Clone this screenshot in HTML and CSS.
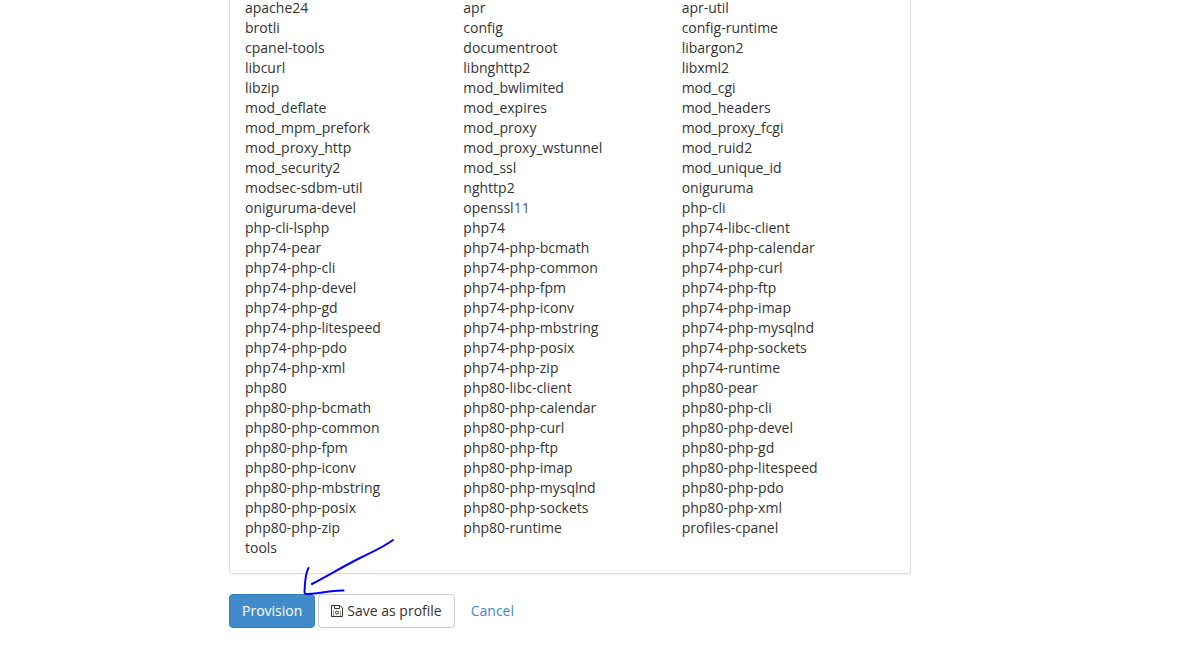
FILE: index.html
```
<!DOCTYPE html>
<html lang="en">
<head>
<meta charset="utf-8">
<title>Review packages</title>
<link rel="stylesheet" href="styles.css">
</head>
<body>
<main class="page">
<section class="panel">
<ul class="packages">
<li>apache24</li><li>apr</li><li>apr-util</li>
<li>brotli</li><li>config</li><li>config-runtime</li>
<li>cpanel-tools</li><li>documentroot</li><li>libargon2</li>
<li>libcurl</li><li>libnghttp2</li><li>libxml2</li>
<li>libzip</li><li>mod_bwlimited</li><li>mod_cgi</li>
<li>mod_deflate</li><li>mod_expires</li><li>mod_headers</li>
<li>mod_mpm_prefork</li><li>mod_proxy</li><li>mod_proxy_fcgi</li>
<li>mod_proxy_http</li><li>mod_proxy_wstunnel</li><li>mod_ruid2</li>
<li>mod_security2</li><li>mod_ssl</li><li>mod_unique_id</li>
<li>modsec-sdbm-util</li><li>nghttp2</li><li>oniguruma</li>
<li>oniguruma-devel</li><li>openssl<span class="version">11</span></li><li>php-cli</li>
<li>php-cli-lsphp</li><li>php74</li><li>php74-libc-client</li>
<li>php74-pear</li><li>php74-php-bcmath</li><li>php74-php-calendar</li>
<li>php74-php-cli</li><li>php74-php-common</li><li>php74-php-curl</li>
<li>php74-php-devel</li><li>php74-php-fpm</li><li>php74-php-ftp</li>
<li>php74-php-gd</li><li>php74-php-iconv</li><li>php74-php-imap</li>
<li>php74-php-litespeed</li><li>php74-php-mbstring</li><li>php74-php-mysqlnd</li>
<li>php74-php-pdo</li><li>php74-php-posix</li><li>php74-php-sockets</li>
<li>php74-php-xml</li><li>php74-php-zip</li><li>php74-runtime</li>
<li>php80</li><li>php80-libc-client</li><li>php80-pear</li>
<li>php80-php-bcmath</li><li>php80-php-calendar</li><li>php80-php-cli</li>
<li>php80-php-common</li><li>php80-php-curl</li><li>php80-php-devel</li>
<li>php80-php-fpm</li><li>php80-php-ftp</li><li>php80-php-gd</li>
<li>php80-php-iconv</li><li>php80-php-imap</li><li>php80-php-litespeed</li>
<li>php80-php-mbstring</li><li>php80-php-mysqlnd</li><li>php80-php-pdo</li>
<li>php80-php-posix</li><li>php80-php-sockets</li><li>php80-php-xml</li>
<li>php80-php-zip</li><li>php80-runtime</li><li>profiles-cpanel</li>
<li>tools</li>
</ul>
</section>
<div class="actions">
<button class="btn btn-primary" type="button">Provision</button>
<button class="btn btn-default" type="button"><svg class="icon" viewBox="0 0 12 12" aria-hidden="true"><path d="M.5 .5H9L11.500 3V11.500H.5ZM3.500 .5V3.500H8.500V.5"/><circle cx="6" cy="7.500" r="1.500"/><path class="icon-detail" d="M2.500 11.500V5.500M9.500 11.500V5.500"/></svg>Save as profile</button>
<a class="btn btn-link" href="#">Cancel</a>
<svg class="arrow" viewBox="0 0 100 65" aria-hidden="true"><path d="M93 5C82 13 72 17 60 23C44 31 29 40 12 49M8.500 33C5 39 5 48 4.500 57Q4.500 59.500 8 59C20 59 30 55 43.500 55.500"/></svg>
</div>
</main>
</body>
</html>
```
FILE: styles.css
```
* {
  box-sizing: border-box;
}

body {
  margin: 0;
  background: #fff;
  color: #333;
  font: 14px/20px "Open Sans", "Noto Sans", sans-serif;
}

.page {
  display: grid;
  grid-template-columns: 229fr 682fr 267fr;
  row-gap: 20px;
}

.panel,
.actions {
  grid-column: 2;
  min-width: 0;
}

.panel {
  margin-top: -2px;
  padding: 0 10px 15px 15px;
  border: 1px solid #ddd;
  border-top: 0;
  border-radius: 0 0 4px 4px;
  box-shadow: 0 1px 1px rgba(0, 0, 0, 0.05);
}

.packages {
  display: grid;
  grid-template-columns: repeat(3, minmax(0, 1fr));
  margin: 0;
  padding: 0;
  list-style: none;
}

.version {
  color: #3f5f85;
}

.actions {
  position: relative;
  display: flex;
  gap: 3px;
}

.btn {
  display: inline-flex;
  align-items: center;
  gap: 4px;
  padding: 6px 12px;
  border: 1px solid transparent;
  border-radius: 4px;
  background: none;
  font: inherit;
  white-space: nowrap;
  cursor: pointer;
}

.btn-primary {
  background: #428bca;
  border-color: #357ebd;
  color: #fff;
}

.btn-default {
  background: #fff;
  border-color: #ccc;
  color: #333;
}

.btn-link {
  color: #428bca;
  text-decoration: none;
}

.icon {
  width: 12px;
  height: 12px;
  fill: none;
  stroke: #333;
  stroke-width: 1;
  stroke-linejoin: round;
}

.icon-detail {
  stroke-opacity: 0.5;
}

.arrow {
  position: absolute;
  left: 71px;
  top: -59px;
  width: 100px;
  height: 65px;
  fill: none;
  stroke: #0000ff;
  stroke-width: 2;
  stroke-linecap: round;
  stroke-linejoin: round;
  pointer-events: none;
}
```
